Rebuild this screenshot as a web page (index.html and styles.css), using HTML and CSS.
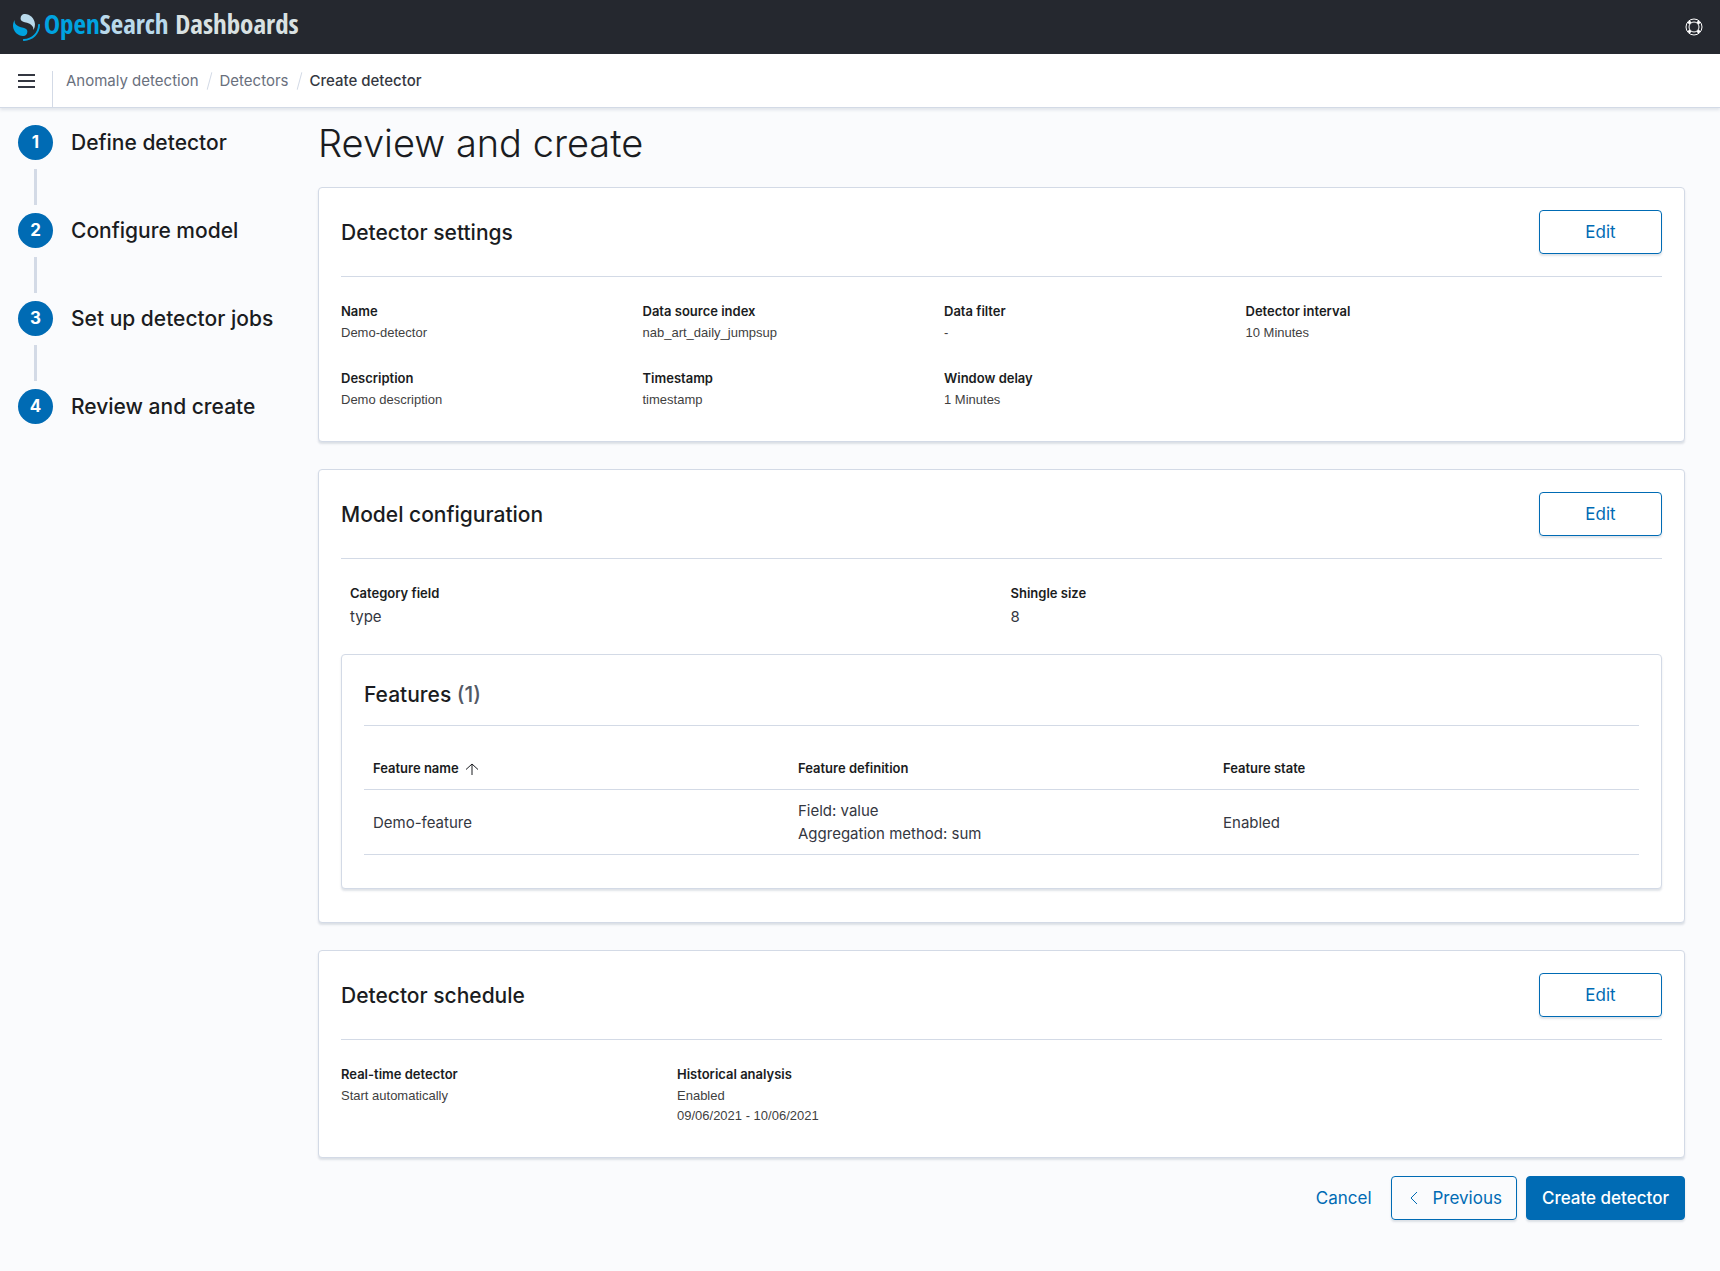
FILE: index.html
```html
<!DOCTYPE html>
<html lang="en">
<head>
<meta charset="utf-8">
<title>Create detector - OpenSearch Dashboards</title>
<meta name="viewport" content="width=device-width, initial-scale=1">
<link rel="stylesheet" href="styles.css">
</head>
<body>
<header class="topbar">
  <a class="brand" href="#">
    <svg class="brand-mark" viewBox="0 0 64 64" aria-hidden="true">
      <path fill="#00a3e0" d="M61.7374 23.5C60.4878 23.5 59.4748 24.513 59.4748 25.7626C59.4748 44.3813 44.3813 59.4748 25.7626 59.4748C24.513 59.4748 23.5 60.4878 23.5 61.7374C23.5 62.987 24.513 64 25.7626 64C46.8805 64 64 46.8805 64 25.7626C64 24.513 62.987 23.5 61.7374 23.5Z"/>
      <path fill="#b9d9eb" d="M48.0814 38C50.2572 34.4505 52.3615 29.7178 51.9475 23.0921C51.0899 9.36725 38.6589 -1.04463 26.9206 0.0837327C22.3253 0.525465 17.6068 4.2712 18.026 10.9805C18.2082 13.8961 19.6352 15.6169 21.9544 16.9399C24.1618 18.1992 26.9978 18.9969 30.2128 19.9011C34.0962 20.9934 38.6009 22.2203 42.063 24.7717C46.2125 27.8295 49.0491 31.3743 48.0814 38Z"/>
      <path fill="#00a3e0" d="M3.91861 14C1.74276 17.5495 -0.361506 22.2822 0.0524931 28.9079C0.910072 42.6327 13.3411 53.0446 25.0794 51.9163C29.6747 51.4745 34.3932 47.7288 33.974 41.0195C33.7918 38.1039 32.3647 36.3831 30.0456 35.0601C27.8382 33.8008 25.0022 33.0031 21.7872 32.0989C17.9038 31.0066 13.3991 29.7797 9.93694 27.2283C5.78746 24.1704 2.95092 20.6257 3.91861 14Z"/>
    </svg>
    <span class="brand-name"><span class="brand-open">Open</span><span class="brand-search">Search</span> Dashboards</span>
  </a>
  <button class="icon-button help" type="button" aria-label="Help">
    <svg width="18" height="18" viewBox="0 0 18 18" fill="none" stroke="currentColor" aria-hidden="true">
      <circle cx="9" cy="9" r="8"/>
      <circle cx="9" cy="9" r="5"/>
      <path stroke-width="3" d="M3.6 3.6l1.8 1.8M14.4 3.6l-1.8 1.8M3.6 14.4l1.8-1.8M14.4 14.4l-1.8-1.8"/>
    </svg>
  </button>
</header>
<div class="navbar">
  <button class="icon-button menu" type="button" aria-label="Toggle navigation">
    <svg width="17" height="14" viewBox="0 0 17 14" fill="currentColor" aria-hidden="true">
      <path d="M0 0h17v2H0zM0 6h17v2H0zM0 12h17v2H0z"/>
    </svg>
  </button>
  <nav class="crumbs" aria-label="Breadcrumb">
    <a class="crumb" href="#">Anomaly detection</a>
    <a class="crumb" href="#">Detectors</a>
    <span class="crumb crumb-current" aria-current="page">Create detector</span>
  </nav>
</div>
<div class="layout">
  <ol class="steps">
    <li class="step"><span class="step-number">1</span><span class="step-title">Define detector</span></li>
    <li class="step"><span class="step-number">2</span><span class="step-title">Configure model</span></li>
    <li class="step"><span class="step-number">3</span><span class="step-title">Set up detector jobs</span></li>
    <li class="step"><span class="step-number">4</span><span class="step-title">Review and create</span></li>
  </ol>
  <main class="content">
    <h1 class="page-title">Review and create</h1>

    <section class="panel">
      <div class="panel-head">
        <h2 class="title">Detector settings</h2>
        <button class="button edit" type="button">Edit</button>
      </div>
      <dl class="fields fields-settings">
        <div class="field"><dt>Name</dt><dd>Demo-detector</dd></div>
        <div class="field"><dt>Data source index</dt><dd>nab_art_daily_jumpsup</dd></div>
        <div class="field"><dt>Data filter</dt><dd>-</dd></div>
        <div class="field"><dt>Detector interval</dt><dd>10 Minutes</dd></div>
        <div class="field"><dt>Description</dt><dd>Demo description</dd></div>
        <div class="field"><dt>Timestamp</dt><dd>timestamp</dd></div>
        <div class="field"><dt>Window delay</dt><dd>1 Minutes</dd></div>
      </dl>
    </section>

    <section class="panel">
      <div class="panel-head">
        <h2 class="title">Model configuration</h2>
        <button class="button edit" type="button">Edit</button>
      </div>
      <dl class="fields fields-model">
        <div class="field"><dt>Category field</dt><dd>type</dd></div>
        <div class="field"><dt>Shingle size</dt><dd>8</dd></div>
      </dl>
      <section class="panel panel-inner">
        <h3 class="title title-ruled">Features <span class="count">(1)</span></h3>
        <table class="features">
          <thead>
            <tr>
              <th scope="col" aria-sort="ascending">
                <button class="sort" type="button">Feature name
                  <svg width="14" height="12" viewBox="0 0 14 12" fill="none" stroke="currentColor" aria-hidden="true"><path d="M7 12V1M1 6.500L7 1l6 5.500"/></svg>
                </button>
              </th>
              <th scope="col">Feature definition</th>
              <th scope="col">Feature state</th>
            </tr>
          </thead>
          <tbody>
            <tr>
              <td>Demo-feature</td>
              <td>Field: value<br>Aggregation method: sum</td>
              <td>Enabled</td>
            </tr>
          </tbody>
        </table>
      </section>
    </section>

    <section class="panel">
      <div class="panel-head">
        <h2 class="title">Detector schedule</h2>
        <button class="button edit" type="button">Edit</button>
      </div>
      <dl class="fields fields-schedule">
        <div class="field"><dt>Real-time detector</dt><dd>Start automatically</dd></div>
        <div class="field"><dt>Historical analysis</dt><dd>Enabled</dd><dd>09/06/2021 - 10/06/2021</dd></div>
      </dl>
    </section>

    <div class="actions">
      <a class="cancel" href="#">Cancel</a>
      <button class="button previous" type="button">
        <svg width="8" height="14" viewBox="0 0 8 14" fill="none" stroke="currentColor" aria-hidden="true"><path d="M7 1L1 7l6 6"/></svg>
        Previous
      </button>
      <button class="button primary" type="button">Create detector</button>
    </div>
  </main>
</div>
</body>
</html>
```
FILE: styles.css
```css
* {
  box-sizing: border-box;
}

body {
  margin: 0;
  background: #fafbfd;
  color: #343741;
  font: 15px/23px Inter, sans-serif;
}

h1, h2, h3, dl, dd, ol {
  margin: 0;
  padding: 0;
}

a {
  text-decoration: none;
}

button {
  font: inherit;
  cursor: pointer;
}

.topbar {
  display: flex;
  align-items: center;
  justify-content: space-between;
  height: 54px;
  padding: 0 17px 0 13px;
  background: #25282f;
}

.brand {
  display: flex;
  align-items: center;
  gap: 4px;
  color: #d9e1e2;
}

.brand-mark {
  width: 27px;
  height: 27px;
}

.brand-name {
  padding-bottom: 6px;
  font: 700 27px/48px "Open Sans Condensed", "Open Sans", sans-serif;
}

.brand-open {
  color: #00a3e0;
}

.brand-search {
  color: #b9d9eb;
}

.icon-button {
  display: flex;
  padding: 0;
  border: 0;
  background: none;
}

.help {
  color: #fff;
}

.navbar {
  display: flex;
  height: 54px;
  border-bottom: 1px solid #d3dae6;
  background: #fff;
  box-shadow: 0 2px 3px rgba(152, 162, 179, 0.25);
}

.menu {
  align-items: center;
  width: 52px;
  padding-left: 18px;
  color: #343741;
}

.crumbs {
  display: flex;
  align-items: center;
  margin-top: 17px;
  padding: 0 0 18px 13px;
  border-left: 1px solid #d3dae6;
}

.crumb {
  color: #69707d;
}

.crumb:not(:last-child)::after {
  content: "";
  display: inline-block;
  width: 1px;
  height: 18px;
  margin: 0 10px;
  background: #d3dae6;
  transform: rotate(15deg);
  vertical-align: middle;
}

.crumb-current {
  color: #343741;
  font-weight: 500;
}

.layout {
  display: grid;
  grid-template-columns: 265px minmax(0, 1fr);
  gap: 35px;
  padding: 17px 35px 46px 18px;
}

.steps {
  list-style: none;
}

.step {
  display: grid;
  grid-template-columns: 35px 1fr;
  column-gap: 18px;
  align-items: center;
  height: 88px;
  grid-template-rows: 35px 35px;
  row-gap: 9px;
}

.step:not(:last-child)::after {
  content: "";
  width: 3px;
  height: 36px;
  background: #d3dae6;
  justify-self: center;
}

.step-number {
  border-radius: 50%;
  background: #006bb4;
  color: #fff;
  font-weight: 700;
  font-size: 17px;
  line-height: 35px;
  text-align: center;
}

.step-title,
.title {
  color: #1a1c21;
  font-size: 21px;
  font-weight: 500;
  line-height: 35px;
}

.page-title {
  margin-bottom: 26px;
  color: #1a1c21;
  font-size: 38px;
  font-weight: 300;
  line-height: 36px;
}

.panel {
  margin-bottom: 27px;
  padding: 22px;
  border: 1px solid #d3dae6;
  border-radius: 4px;
  background: #fff;
  box-shadow: 0 2px 2px rgba(152, 162, 179, 0.3);
}

.panel-head {
  display: flex;
  align-items: center;
  justify-content: space-between;
  padding-bottom: 22px;
  border-bottom: 1px solid #d3dae6;
}

.button {
  display: flex;
  align-items: center;
  justify-content: center;
  height: 44px;
  border: 1px solid #006bb4;
  border-radius: 4px;
  background: transparent;
  color: #006bb4;
  font-size: 17px;
  box-shadow: 0 2px 2px rgba(152, 162, 179, 0.3);
}

.edit {
  width: 123px;
}

.fields {
  display: grid;
}

.fields-settings {
  grid-template-columns: repeat(4, 1fr);
  row-gap: 24px;
  padding: 23px 115px 9px 0;
}

.fields-model {
  grid-template-columns: repeat(2, 1fr);
  padding: 23px 0 26px;
}

.fields-model .field {
  padding-left: 9px;
}

.fields-schedule {
  grid-template-columns: 336px 1fr;
  padding: 23px 0 9px;
}

.field dt {
  color: #1a1c21;
  font-size: 13px;
  font-weight: 600;
  line-height: 23px;
}

.field dd {
  color: #3f3f3f;
  font: 13px/20px "Liberation Sans", Arial, sans-serif;
}

.fields-model dd {
  color: #343741;
  font: 15px/23px Inter, sans-serif;
}

.panel-inner {
  margin-bottom: 11px;
}

.title-ruled {
  padding-bottom: 13px;
  border-bottom: 1px solid #d3dae6;
}

.count {
  color: #535966;
}

.features {
  width: 100%;
  margin: 22px 0 11px;
  border-collapse: collapse;
  table-layout: fixed;
}

.features th,
.features td {
  padding: 9px;
  border-bottom: 1px solid #d3dae6;
  text-align: left;
}

.features th {
  color: #1a1c21;
  font-size: 13px;
  font-weight: 600;
}

.sort {
  display: flex;
  align-items: center;
  gap: 6px;
  padding: 0;
  border: 0;
  background: none;
  color: inherit;
}

.actions {
  display: flex;
  align-items: center;
  justify-content: flex-end;
  gap: 9px;
  margin-top: -9px;
}

.cancel {
  margin-right: 10px;
  color: #006bb4;
  font-size: 17px;
}

.previous {
  gap: 15px;
  padding: 0 14px 0 18px;
}

.primary {
  padding: 0 15px;
  background: #006bb4;
  color: #fff;
  font-weight: 500;
}
```
